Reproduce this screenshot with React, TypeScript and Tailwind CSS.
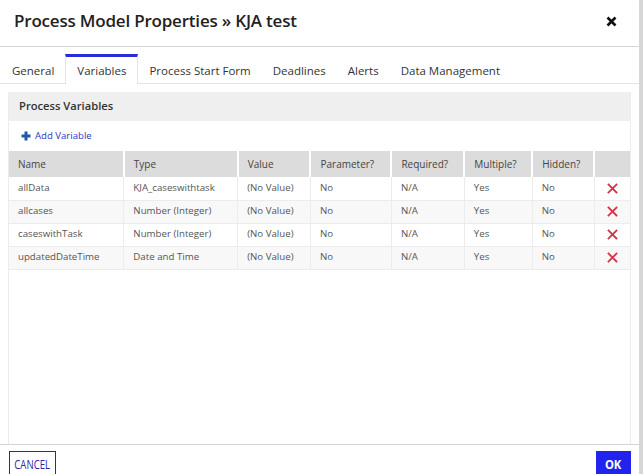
import React from "react";

type Variable = {
  name: string;
  type: string;
  value: string;
  parameter: string;
  required: string;
  multiple: string;
  hidden: string;
};

const tabs = ["General", "Variables", "Process Start Form", "Deadlines", "Alerts", "Data Management"];

const variables: Variable[] = [
  { name: "allData", type: "KJA_caseswithtask", value: "(No Value)", parameter: "No", required: "N/A", multiple: "Yes", hidden: "No" },
  { name: "allcases", type: "Number (Integer)", value: "(No Value)", parameter: "No", required: "N/A", multiple: "Yes", hidden: "No" },
  { name: "caseswithTask", type: "Number (Integer)", value: "(No Value)", parameter: "No", required: "N/A", multiple: "Yes", hidden: "No" },
  { name: "updatedDateTime", type: "Date and Time", value: "(No Value)", parameter: "No", required: "N/A", multiple: "Yes", hidden: "No" },
];

// column widths taken from the screenshot
const cols = [
  { label: "Name", w: "w-[115px]" },
  { label: "Type", w: "w-[114px]" },
  { label: "Value", w: "w-[73px]" },
  { label: "Parameter?", w: "w-[81px]" },
  { label: "Required?", w: "w-[73px]" },
  { label: "Multiple?", w: "w-[68px]" },
  { label: "Hidden?", w: "w-[62px]" },
  { label: "", w: "w-[36px]" },
];

function DeleteIcon() {
  return (
    <svg width="11" height="11" viewBox="0 0 11 11" className="mx-auto">
      <path d="M1.5 1.5 L9.5 9.5 M9.5 1.5 L1.5 9.5" stroke="#d3384a" strokeWidth="1.8" strokeLinecap="square" />
    </svg>
  );
}

export default function App() {
  return (
    <div className="flex h-[474px] w-[643px] overflow-hidden bg-white font-['Open_Sans',sans-serif]">
      <div className="flex w-[639px] flex-col">
        {/* title */}
        <div className="flex h-[47px] shrink-0 items-center justify-between border-b border-[#d4d4d4] pl-[14px] pr-[22px]">
          <h1 className="pb-[4px] text-[17px] font-semibold tracking-[-0.2px] text-[#222]">Process Model Properties » KJA test</h1>
          <svg width="11" height="11" viewBox="0 0 11 11" className="mb-[3px]">
            <path d="M1.5 1.5 L9.5 9.5 M9.5 1.5 L1.5 9.5" stroke="#111" strokeWidth="2.6" />
          </svg>
        </div>

        {/* tabs */}
        <div className="mt-[7px] flex h-[30px] shrink-0 border-b border-[#e4e4e4] pl-px">
          {tabs.map((t) =>
            t === "Variables" ? (
              <div
                key={t}
                className="-mb-px flex items-center border-x border-t-[3px] border-x-[#e4e4e4] border-t-[#2b2bd9] bg-white px-[11px] pt-[1px] text-[11.5px] text-[#333]"
              >
                {t}
              </div>
            ) : (
              <div key={t} className="flex items-center px-[11px] pt-[4px] text-[11.5px] text-[#333]">
                {t}
              </div>
            )
          )}
        </div>

        {/* content */}
        <div className="mx-[8px] mt-[8px] flex flex-1 flex-col border-x border-[#ececec]">
          <div className="flex h-[29px] shrink-0 items-center bg-[#efefef] pl-[10px] text-[11.2px] font-semibold text-[#333]">
            Process Variables
          </div>
          <div className="flex h-[30px] shrink-0 items-center gap-[4px] pl-[12px] text-[9.6px] text-[#2c3bc4]">
            <svg width="10" height="10" viewBox="0 0 10 10">
              <path d="M5 0.5 V9.5 M0.5 5 H9.5" stroke="#1f58a8" strokeWidth="3" />
            </svg>
            Add Variable
          </div>
          <table className="w-full border-collapse text-left text-[9.7px] text-[#555]">
            <thead>
              <tr className="h-[26px] bg-[#dcdcdc] text-[10px] text-[#444]">
                {cols.map((c, i) => (
                  <th key={i} className={`${c.w} border-r-2 border-white pl-[9px] font-normal last:border-r-0`}>
                    {c.label}
                  </th>
                ))}
              </tr>
            </thead>
            <tbody>
              {variables.map((v, i) => (
                <tr key={v.name} className={`h-[23px] border-b border-[#ececec] ${i % 2 === 1 ? "bg-[#f8f8f8]" : "bg-white"}`}>
                  <td className="border-r border-[#ececec] pl-[9px]">{v.name}</td>
                  <td className="border-r border-[#ececec] pl-[9px]">{v.type}</td>
                  <td className="border-r border-[#ececec] pl-[9px]">{v.value}</td>
                  <td className="border-r border-[#ececec] pl-[9px]">{v.parameter}</td>
                  <td className="border-r border-[#ececec] pl-[9px]">{v.required}</td>
                  <td className="border-r border-[#ececec] pl-[9px]">{v.multiple}</td>
                  <td className="border-r border-[#ececec] pl-[9px]">{v.hidden}</td>
                  <td>
                    <DeleteIcon />
                  </td>
                </tr>
              ))}
            </tbody>
          </table>
        </div>

        {/* footer */}
        <div className="flex h-[30px] shrink-0 items-start justify-between border-t border-[#d4d4d4] pl-[9px] pr-[8px] pt-[6px]">
          <button className="flex h-[28px] w-[47px] items-center justify-center border border-[#2a2a9a] text-[13px] text-[#2a2aa8]">
            <span className="inline-block scale-x-[0.74]">CANCEL</span>
          </button>
          <button className="flex h-[28px] w-[35px] items-center justify-center bg-[#2323ee] text-[12.5px] font-bold text-white">
            <span className="inline-block scale-x-[0.9]">OK</span>
          </button>
        </div>
      </div>
      <div className="w-[4px] bg-[#d6d6d6]" />
    </div>
  );
}
